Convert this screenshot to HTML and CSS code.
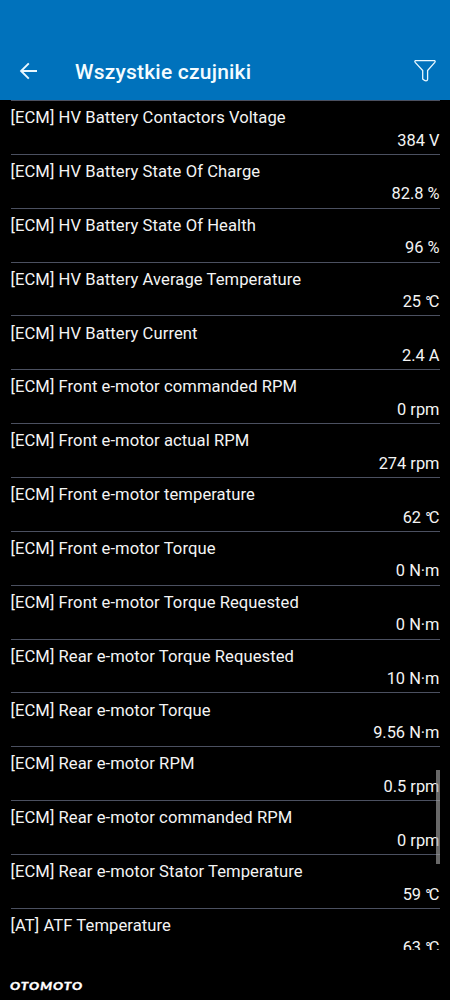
FILE: index.html
```html
<!DOCTYPE html>
<html lang="pl">
<head>
<meta charset="utf-8">
<title>Wszystkie czujniki</title>
<link rel="stylesheet" href="styles.css">
</head>
<body>
<div class="screen">
  <header class="bar">
    <svg class="back" width="20" height="20" viewBox="0 0 20 20"><path d="M18 10H2.200M9.800 2.300L2.100 10l7.700 7.700"/></svg>
    <h1 class="title">Wszystkie czujniki</h1>
    <svg class="filter" width="24" height="24" viewBox="0 0 24 24"><path d="M2.200 1.600h19.600q.8.800 0 1.800l-7.200 8.200v8.700q-.2 1.500-1.600 1.500t-3.300-1.700v-8.500L2.200 3.400q-.8-1 0-1.800z"/></svg>
  </header>
  <main class="list">
    <div class="row"><span class="name">[ECM] HV Battery Contactors Voltage</span><span class="value">384 V</span></div>
    <div class="row"><span class="name">[ECM] HV Battery State Of Charge</span><span class="value">82.8 %</span></div>
    <div class="row"><span class="name">[ECM] HV Battery State Of Health</span><span class="value">96 %</span></div>
    <div class="row"><span class="name">[ECM] HV Battery Average Temperature</span><span class="value">25 <span class="deg">°</span>C</span></div>
    <div class="row"><span class="name">[ECM] HV Battery Current</span><span class="value">2.4 A</span></div>
    <div class="row"><span class="name">[ECM] Front e-motor commanded RPM</span><span class="value">0 rpm</span></div>
    <div class="row"><span class="name">[ECM] Front e-motor actual RPM</span><span class="value">274 rpm</span></div>
    <div class="row"><span class="name">[ECM] Front e-motor temperature</span><span class="value">62 <span class="deg">°</span>C</span></div>
    <div class="row"><span class="name">[ECM] Front e-motor Torque</span><span class="value">0 N·m</span></div>
    <div class="row"><span class="name">[ECM] Front e-motor Torque Requested</span><span class="value">0 N·m</span></div>
    <div class="row"><span class="name">[ECM] Rear e-motor Torque Requested</span><span class="value">10 N·m</span></div>
    <div class="row"><span class="name">[ECM] Rear e-motor Torque</span><span class="value">9.56 N·m</span></div>
    <div class="row"><span class="name">[ECM] Rear e-motor RPM</span><span class="value">0.5 rpm</span></div>
    <div class="row"><span class="name">[ECM] Rear e-motor commanded RPM</span><span class="value">0 rpm</span></div>
    <div class="row"><span class="name">[ECM] Rear e-motor Stator Temperature</span><span class="value">59 <span class="deg">°</span>C</span></div>
    <div class="row"><span class="name">[AT] ATF Temperature</span><span class="value">63 <span class="deg">°</span>C</span></div>
    <div class="scroll"></div>
  </main>
  <footer class="foot"><span class="brand">OTOMOTO</span></footer>
</div>
</body>
</html>
```
FILE: styles.css
```css
body { margin: 0; background: #000; }
.screen {
  width: 450px; height: 1000px; overflow: hidden;
  display: flex; flex-direction: column;
  background: #000; color: #f4f4f4;
  font-family: Roboto, "Liberation Sans", sans-serif;
}
.bar {
  box-sizing: border-box; height: 100px; flex: none;
  padding: 42px 13px 0 19px;
  display: flex; align-items: center;
  background: #0072bc;
}
.back, .filter { fill: none; stroke: #e9f8ff; }
.back { stroke-width: 1.9; }
.filter { stroke-width: 1.3; margin-left: auto; }
.title { margin: 1px 0 0 36px; font-size: 21px; line-height: 24px; font-weight: 500; letter-spacing: .21px; color: #f4fcff; }
.list { position: relative; height: 850px; flex: none; overflow: hidden; padding: 0 10.500px; }
.row {
  box-sizing: border-box; height: 53.870px;
  border-top: 1px solid #4b5060;
  padding-top: 6.100px;
  display: flex; flex-direction: column;
  font-size: 16.400px; line-height: 22.400px; white-space: nowrap;
}
.name { font-size: 16.600px; letter-spacing: .07px; }
.value { align-self: flex-end; }
.deg { font-size: 15px; letter-spacing: -1.900px; }
.scroll {
  position: absolute; right: 10.500px; top: 670px;
  width: 4px; height: 94px; background: rgba(160, 160, 160, .65);
}
.foot { flex: 1; display: flex; align-items: center; padding: 22px 10px 0; }
.brand {
  font: italic 900 12px/14px Lato, sans-serif; letter-spacing: .9px; color: #fff;
  -webkit-text-stroke: .3px #fff;
  transform: scaleX(1.115); transform-origin: left center;
}
```
